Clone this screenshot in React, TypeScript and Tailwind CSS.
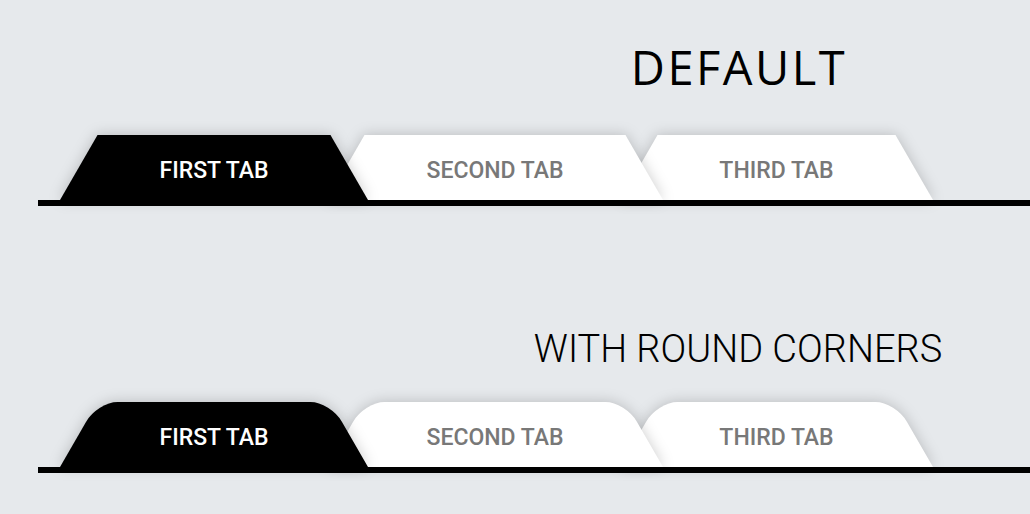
const tabs = [
  { label: "FIRST TAB", width: "w-[308px]", z: "z-30", ml: "" },
  { label: "SECOND TAB", width: "w-[336px]", z: "z-20", ml: "-ml-[41px]" },
  { label: "THIRD TAB", width: "w-[313px]", z: "z-10", ml: "-ml-[43px]" },
]

function Tab({ label, width, z, ml, active, rounded }: {
  label: string
  width: string
  z: string
  ml: string
  active: boolean
  rounded: boolean
}) {
  const bg = active ? "bg-black" : "bg-white"
  return (
    <div className={`relative ${z} ${ml} ${width} h-[65px] flex items-center justify-center pt-[6px]`}>
      <div className="absolute inset-0 [filter:drop-shadow(0_0_7px_rgba(0,0,0,0.2))]">
        <div className={`absolute inset-y-0 left-0 w-[55%] origin-bottom -skew-x-30 ${bg} ${rounded ? "rounded-tl-[20px]" : ""}`} />
        <div className={`absolute inset-y-0 right-0 w-[55%] origin-bottom skew-x-30 ${bg} ${rounded ? "rounded-tr-[20px]" : ""}`} />
      </div>
      <span className={`relative text-[23px] font-medium leading-none ${active ? "text-white" : "text-[#787878]"}`}>
        {label}
      </span>
    </div>
  )
}

function TabBar({ rounded }: { rounded: boolean }) {
  return (
    <div>
      <div className="flex pl-[22px]">
        {tabs.map((t, i) => (
          <Tab key={t.label} {...t} active={i === 0} rounded={rounded} />
        ))}
      </div>
      <div className="h-[6px] bg-black" />
    </div>
  )
}

export default function App() {
  return (
    <div className="w-[1030px] h-[514px] overflow-hidden bg-[#e6e9ec] font-['Roboto',sans-serif]">
      <div className="w-[1400px] ml-[38px] pt-[44px]">
        <h1 className="text-center font-['Open_Sans',sans-serif] text-[47px] leading-none font-normal tracking-[2.5px] pl-[2px] text-black">DEFAULT</h1>
        <div className="mt-[44px]">
          <TabBar rounded={false} />
        </div>
        <h2 className="mt-[124px] text-center text-[38px] leading-none font-light text-black">WITH ROUND CORNERS</h2>
        <div className="mt-[34px]">
          <TabBar rounded={true} />
        </div>
      </div>
    </div>
  )
}
